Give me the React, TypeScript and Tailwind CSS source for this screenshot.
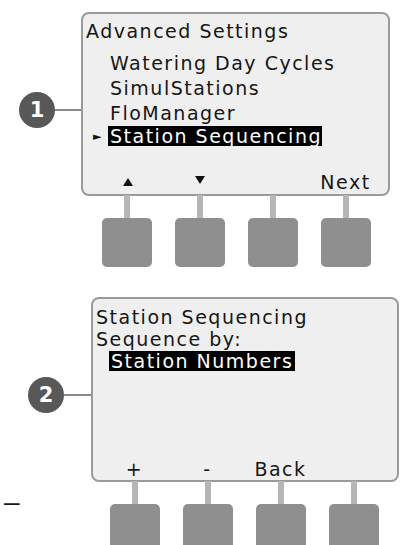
import React from "react";

const font = { fontFamily: "'DejaVu Sans', Verdana, sans-serif" };

const Badge = ({ n }: { n: string }) => (
  <div className="w-[36px] h-[36px] rounded-full bg-[#585858] flex items-center justify-center text-white text-[21px] font-bold leading-none shrink-0">
    {n}
  </div>
);

const Up = () => (
  <svg width="10" height="8" viewBox="0 0 10 8">
    <path d="M5 0 L10 8 L0 8 Z" fill="#111" />
  </svg>
);

const Down = () => (
  <svg width="10" height="8" viewBox="0 0 10 8">
    <path d="M0 0 L10 0 L5 8 Z" fill="#111" />
  </svg>
);

const Buttons = ({ offset }: { offset: string }) => (
  <div className={`grid grid-cols-[repeat(4,73px)] ${offset}`}>
    {[0, 1, 2, 3].map((i) => (
      <div key={i} className="flex flex-col items-center">
        <div className="w-[6px] h-[23px] bg-[#b6b6b6]" />
        <div className="w-[50px] h-[49px] rounded-[5px] bg-[#8f8f8f]" />
      </div>
    ))}
  </div>
);

export default function App() {
  return (
    <div className="w-[401px] h-[545px] overflow-hidden bg-white text-[#161616] relative" style={font}>
      {/* step 1 */}
      <div className="flex items-start pt-[12px]">
        <div className="w-[81px] flex items-center pl-[19px] mt-[80px]">
          <Badge n="1" />
          <div className="flex-1 h-[2px] bg-[#8a8a8a]" />
        </div>
        <div className="flex flex-col">
          <div className="w-[309px] h-[184px] border-2 border-[#9a9a9a] rounded-[8px] bg-[#efefef] flex flex-col text-[19px] tracking-[1.5px]">
            <div className="pl-[3px] pt-[5px] leading-[25px]">Advanced Settings</div>
            <div className="mt-[7px] leading-[25px]">
              <div className="pl-[27px]">Watering Day Cycles</div>
              <div className="pl-[27px]">SimulStations</div>
              <div className="pl-[27px]">FloManager</div>
              <div className="flex items-center pl-[10px]">
                <span className="w-[15px] text-[11px] leading-none">►</span>
                <span className="bg-black text-white pl-[2px] leading-[20px]">Station Sequencing</span>
              </div>
            </div>
            <div className="mt-auto mb-[2px] ml-[7px] grid grid-cols-[repeat(4,73px)] items-center h-[20px] leading-[20px]">
              <div className="flex justify-center pl-[2px]"><Up /></div>
              <div className="flex justify-center pb-[4px]"><Down /></div>
              <div />
              <div className="text-center">Next</div>
            </div>
          </div>
          <Buttons offset="ml-[9px] -mt-[1px]" />
        </div>
      </div>

      {/* step 2 */}
      <div className="flex items-start mt-[30px]">
        <div className="w-[91px] flex flex-col">
          <div className="flex items-center pl-[28px] mt-[80px]">
            <Badge n="2" />
            <div className="flex-1 h-[2px] bg-[#8a8a8a]" />
          </div>
          <div className="mt-[79px] pl-[4px] text-[28px] leading-[20px]" style={{ fontFamily: "'Liberation Sans', Arial, sans-serif" }}>
            –
          </div>
        </div>
        <div className="flex flex-col">
          <div className="w-[308px] h-[185px] border-2 border-[#9a9a9a] rounded-[8px] bg-[#efefef] flex flex-col text-[19px] tracking-[1.5px]">
            <div className="pl-[3px] pt-[7px] leading-[22px]">Station Sequencing</div>
            <div className="pl-[3px] leading-[22px]">Sequence by:</div>
            <div className="pl-[16px] mt-[1px] leading-[20px]">
              <span className="bg-black text-white pl-[2px] pr-[2px] leading-[20px] inline-block">Station Numbers</span>
            </div>
            <div className="mt-auto mb-[1px] ml-[5px] grid grid-cols-[repeat(4,73px)] h-[20px] leading-[20px]">
              <div className="text-center">+</div>
              <div className="text-center">-</div>
              <div className="text-center">Back</div>
              <div />
            </div>
          </div>
          <Buttons offset="ml-[7px] -mt-[1px]" />
        </div>
      </div>
    </div>
  );
}
